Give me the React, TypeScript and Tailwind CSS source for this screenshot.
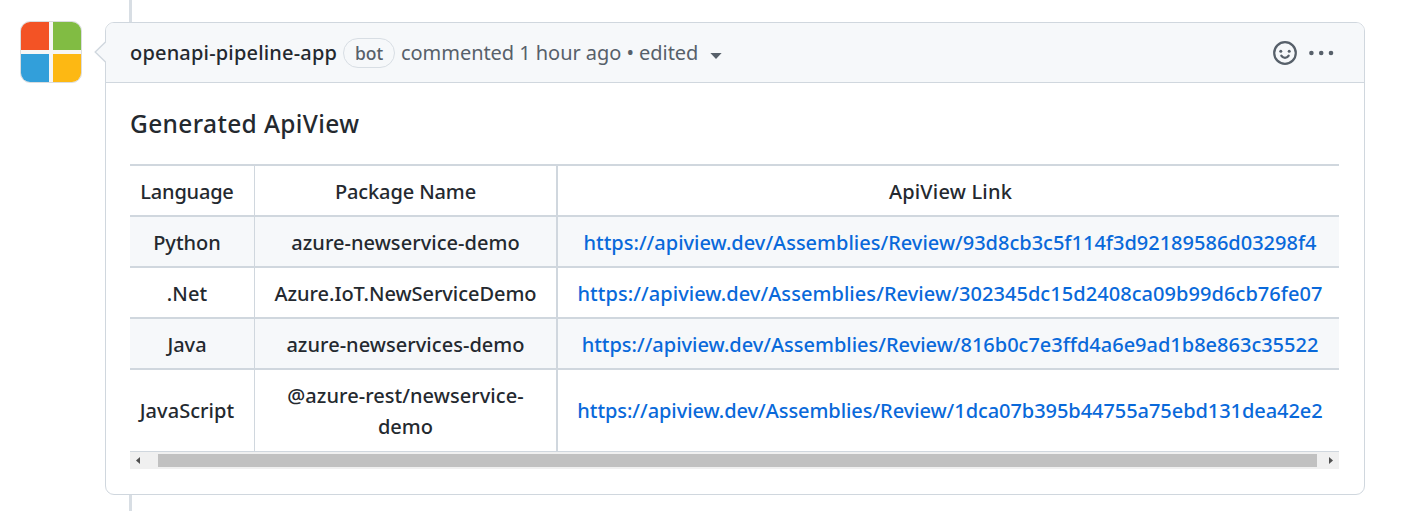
const rows = [
  {
    language: "Python",
    languageClass: "tracking-[0px]",
    packageLines: ["azure-newservice-demo"],
    packageClass: "tracking-[0.04px]",
    link: "https://apiview.dev/Assemblies/Review/93d8cb3c5f114f3d92189586d03298f4",
    linkClass: "tracking-[0px]",
  },
  {
    language: ".Net",
    languageClass: "tracking-[0.1px]",
    packageLines: ["Azure.IoT.NewServiceDemo"],
    packageClass: "tracking-[-0.05px]",
    link: "https://apiview.dev/Assemblies/Review/302345dc15d2408ca09b99d6cb76fe07",
    linkClass: "tracking-[0.06px]",
  },
  {
    language: "Java",
    languageClass: "tracking-[0px]",
    packageLines: ["azure-newservices-demo"],
    packageClass: "tracking-[0.04px]",
    link: "https://apiview.dev/Assemblies/Review/816b0c7e3ffd4a6e9ad1b8e863c35522",
    linkClass: "tracking-[-0.01px]",
  },
  {
    language: "JavaScript",
    languageClass: "tracking-[0.05px]",
    packageLines: ["@azure-rest/newservice-", "demo"],
    packageClass: "tracking-[0.05px]",
    link: "https://apiview.dev/Assemblies/Review/1dca07b395b44755a75ebd131dea42e2",
    linkClass: "tracking-[-0.06px]",
  },
];

function Avatar() {
  return (
    <svg className="mt-[21px] ml-5 h-[62px] w-[62px] shrink-0" viewBox="0 0 62 62">
      <defs>
        <clipPath id="avatar">
          <rect x="1" y="1" width="60" height="60" rx="9" />
        </clipPath>
      </defs>
      <rect x="0.5" y="0.5" width="61" height="61" rx="9.5" fill="#f6f6f6" stroke="#dadcde" />
      <g clipPath="url(#avatar)">
        <path fill="#f35325" d="M1 1h28v28H1z" />
        <path fill="#81bc43" d="M33 1h28v28H33z" />
        <path fill="#329fda" d="M1 33h28v28H1z" />
        <path fill="#fdb813" d="M33 33h28v28H33z" />
      </g>
    </svg>
  );
}

function Header() {
  return (
    <header className="flex h-[60px] items-center rounded-t-[8px] border-b border-[#d0d7de] bg-[#f6f8fa] pl-6 whitespace-nowrap text-[#57606a]">
      <span className="w-[207px] text-[20px] font-medium tracking-[0.18px] text-[#24292f]">openapi-pipeline-app</span>
      <span className="ml-[6px] flex h-[30px] w-[52px] items-center justify-center rounded-full border border-[#d8dee4] pt-[2px] text-[17.5px] font-medium">
        bot
      </span>
      <span className="ml-[6px] w-[298px] text-[20px] tracking-[-0.05px]">commented 1 hour ago • edited</span>
      <svg className="mt-[6px] ml-[11px] h-[6px] w-[12px]" viewBox="0 0 12 6">
        <path fill="#57606a" d="M0.4 0h11.2L6 6z" />
      </svg>
      <svg className="ml-auto h-6 w-6" viewBox="0 0 24 24" fill="none" stroke="#57606a" strokeWidth="2.2">
        <circle cx="12" cy="12" r="10.8" />
        <circle cx="7.8" cy="10.3" r="1.5" fill="#57606a" stroke="none" />
        <circle cx="16.2" cy="10.3" r="1.5" fill="#57606a" stroke="none" />
        <path d="M8.3 14.6Q9.6 16.8 12 16.8T15.7 14.6" strokeLinecap="round" />
      </svg>
      <svg className="mr-[30px] ml-3 h-[6px] w-[25px]" viewBox="0 0 25 6" fill="#57606a">
        <circle cx="2.4" cy="3" r="2.3" />
        <circle cx="12.2" cy="3" r="2.3" />
        <circle cx="22" cy="3" r="2.3" />
      </svg>
    </header>
  );
}

function Scrollbar() {
  return (
    <div className="flex h-[17px] items-center bg-[#f0f0f0]">
      <svg className="ml-[6px] h-[7px] w-[4px]" viewBox="0 0 4 7">
        <path fill="#505050" d="M4 0v7L0 3.5z" />
      </svg>
      <div className="ml-[18px] h-[13px] w-[1159px] bg-[#c1c1c1]" />
      <svg className="ml-[12px] h-[7px] w-[4px]" viewBox="0 0 4 7">
        <path fill="#505050" d="M0 0v7L4 3.5z" />
      </svg>
    </div>
  );
}

export default function App() {
  return (
    <div className="flex h-[511px] w-[1418px] overflow-hidden bg-white font-['Noto_Sans','Open_Sans',sans-serif] text-[#24292f]">
      <Avatar />
      <div className="relative ml-[23px] flex w-[1260px] flex-col">
        <div className="ml-6 h-[22px] w-[3px] bg-[#d8dee4]" />
        <article className="h-[473px] rounded-[9px] border border-[#d0d7de] bg-white">
          <Header />
          <div className="pr-[25px] pl-6">
            <h3 className="flex h-[81px] items-center pt-[2px] text-[24.5px] font-medium tracking-[0.37px]">Generated ApiView</h3>
            <table className="w-[1209px] table-fixed border-separate border-spacing-0 border-t-2 border-[#d0d7de] text-center text-[20px] leading-[31px] font-medium whitespace-nowrap">
              <colgroup>
                <col className="w-[125px]" />
                <col className="w-[303px]" />
                <col className="w-[781px]" />
              </colgroup>
              <thead>
                <tr className="h-[51px] [&>th]:pt-px">
                  <th className="border-r border-b-2 border-[#d0d7de] p-0 pr-[10px] font-medium tracking-[-0.2px]">Language</th>
                  <th className="border-r-2 border-b-2 border-[#d0d7de] p-0 font-medium tracking-[-0.12px]">Package Name</th>
                  <th className="border-b-2 border-[#d0d7de] p-0 pl-1 font-medium tracking-[0.2px]">ApiView Link</th>
                </tr>
              </thead>
              <tbody>
                {rows.map((row) => (
                  <tr key={row.language} className="h-[51px] odd:bg-[#f6f8fa] last:h-[82px] [&>td]:border-b-2 [&>td]:pt-px last:[&>td]:border-b last:[&>td]:pt-0">
                    <td className={`border-r border-[#d0d7de] p-0 pr-[10px] ${row.languageClass}`}>{row.language}</td>
                    <td className={`border-r-2 border-[#d0d7de] p-0 ${row.packageClass}`}>
                      {row.packageLines.map((line) => (
                        <div key={line}>{line}</div>
                      ))}
                    </td>
                    <td className={`border-[#d0d7de] p-0 pl-[3px] text-[#0969da] ${row.linkClass}`}>
                      <a href="#">{row.link}</a>
                    </td>
                  </tr>
                ))}
              </tbody>
            </table>
            <Scrollbar />
          </div>
        </article>
        <div className="ml-6 h-4 w-[3px] bg-[#d8dee4]" />
        <svg className="absolute top-[41px] -left-[11px] h-[22px] w-[12px]" viewBox="0 0 12 22">
          <path fill="#f6f8fa" stroke="#d0d7de" strokeWidth="1.4" d="M12 0.5L1.2 11L12 21.5" />
        </svg>
      </div>
    </div>
  );
}
